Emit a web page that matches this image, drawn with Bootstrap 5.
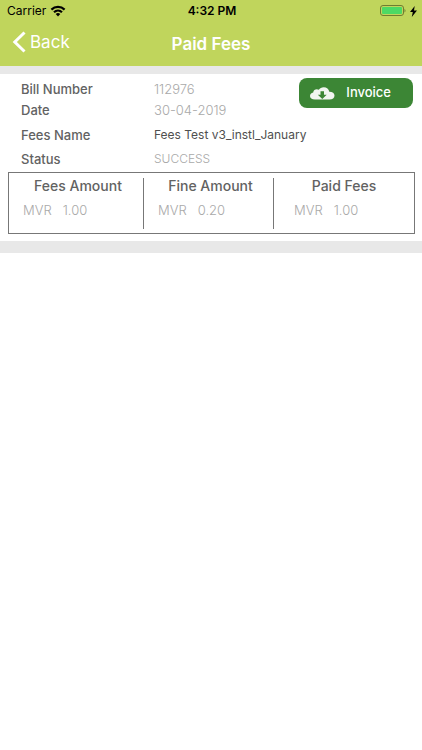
<!DOCTYPE html>
<html lang="en">
<head>
<meta charset="utf-8">
<meta name="viewport" content="width=device-width, initial-scale=1">
<title>Paid Fees</title>
<link href="https://cdn.jsdelivr.net/npm/bootstrap@5.3.0/dist/css/bootstrap.min.css" rel="stylesheet">
<style>
body { font-family: Inter, "Liberation Sans", sans-serif; font-size: 14px; line-height: 20px; color: #626262; }
.app-header { background: #c0d55c; }
.status-line { height: 22px; font-size: 12px; padding: 0 5px 0 7px; }
.title-line { height: 44px; padding: 0 12px 1px; color: #fff; font-size: 17px; }
.page-title { font-size: 17px; line-height: 20px; }
.side { flex: 1 1 0; }
.bill { border-top: 8px solid #e8e8e8; border-bottom: 12px solid #e8e8e8; padding: 4px 7px 7px 8px; }
.details { display: grid; grid-template-columns: 133px 1fr 114px; grid-template-rows: 21px 21px 29px 20px; align-items: center; padding: 0 2px 3px 13px; margin: 0; }
.details dt { grid-column: 1; font-size: 13px; font-weight: 500; }
.details dd { grid-column: 2; margin: 0; }
.details .wide { grid-column: 2 / span 2; font-size: 12px; color: #4f4f4f; }
.pale { color: #a9a9a9; font-size: 13px; font-weight: 300; }
.details .state { font-size: 12px; }
.details .invoice-cell { grid-column: 3; grid-row: 1 / span 2; align-self: start; }
.btn-invoice, .btn-invoice:hover { background: #3c8635; color: #fff; border: 0; border-radius: 8px; height: 30px; font-size: 13px; font-weight: 500; padding: 0 22px 0 11px; }
.amounts { display: grid; grid-template-columns: 134fr 130fr 141fr; border: 1px solid #777; height: 62px; padding: 5px 0 4px; }
.amount { padding-left: 14px; }
.amount + .amount { border-left: 1px solid #777; }
.amount h2 { font-size: 14px; line-height: 16px; font-weight: 500; margin: 0 10px 8px 0; text-align: center; }
.amount:last-child { padding-left: 20px; }
.amount:last-child h2 { margin-right: 20px; }
.amount p { line-height: 16px; gap: 11px; }
</style>
<script src="https://cdn.jsdelivr.net/npm/bootstrap@5.3.0/dist/js/bootstrap.bundle.min.js"></script>
</head>
<body class="bg-white">
<header class="app-header">
  <div class="status-line d-flex align-items-center text-black">
    <div class="side d-flex align-items-center gap-1">
      <span>Carrier</span>
      <svg width="16" height="12" viewBox="0 0 16 12" aria-hidden="true"><g fill="none" stroke="#000" stroke-width="2.2"><path d="M1.4 4.600a9.500 9.500 0 0 1 13.200 0"/><path d="M4 7.300a5.800 5.800 0 0 1 8 0"/></g><path d="M5.700 9.100a3.400 3.400 0 0 1 4.600 0L8 11.400z"/></svg>
    </div>
    <span class="fw-semibold">4:32 PM</span>
    <div class="side d-flex align-items-center justify-content-end gap-1">
      <svg width="27" height="12" viewBox="0 0 27 12" aria-hidden="true"><rect x="1.5" y=".5" width="23" height="10" rx="2.5" fill="none" stroke="#6f7c32"/><rect x="3" y="2" width="20" height="7" rx="1" fill="#4cd964"/><path d="M25.500 3.800q2 2 0 3.800z" fill="#6f7c32"/></svg>
      <svg width="7" height="11" viewBox="0 0 7 11" aria-hidden="true"><path d="M4.700 0 0 6h2.800L1.800 11 7 4.600H4z"/></svg>
    </div>
  </div>
  <nav class="title-line d-flex align-items-center" aria-label="Page">
    <div class="side"><a href="#" class="d-inline-flex align-items-center text-white text-decoration-none gap-1"><svg width="14" height="22" viewBox="0 0 14 22" fill="none" stroke="#fff" stroke-width="3" aria-hidden="true"><path d="M12.500 1.500 2.800 11l9.700 9.500"/></svg><span>Back</span></a></div>
    <h1 class="page-title m-0 fw-semibold">Paid Fees</h1>
    <div class="side"></div>
  </nav>
</header>
<main>
  <section class="bill">
    <dl class="details">
      <dt>Bill Number</dt><dd class="pale">112976</dd>
      <dd class="invoice-cell">
        <button type="button" class="btn btn-invoice w-100 d-flex align-items-center justify-content-between">
          <svg width="25" height="13" viewBox="0 0 25 13" aria-hidden="true"><path d="M5 12.500C1.800 12.500 0 11 0 8.900c0-1.900 1.300-3.200 3.200-3.500C3.500 3.300 5 2.300 6.800 2.300c.8 0 1.400.2 2 .5C9.800 1 11.600.2 13.700.2c3 0 5.200 1.900 5.600 4.600 3.300.1 5.200 1.500 5.200 3.800 0 2.500-2 3.900-5 3.900z" fill="#f1f5f0"/><path d="M10.500 4.300h3.500v3.500h2.700l-4.400 4.200-4.500-4.200h2.700z" fill="#3c8635"/></svg>
          <span>Invoice</span>
        </button>
      </dd>
      <dt>Date</dt><dd class="pale">30-04-2019</dd>
      <dt>Fees Name</dt><dd class="wide">Fees Test v3_instl_January</dd>
      <dt>Status</dt><dd class="pale state">SUCCESS</dd>
    </dl>
    <div class="amounts">
      <div class="amount"><h2>Fees Amount</h2><p class="pale d-flex m-0"><span>MVR</span><span>1.00</span></p></div>
      <div class="amount"><h2>Fine Amount</h2><p class="pale d-flex m-0"><span>MVR</span><span>0.20</span></p></div>
      <div class="amount"><h2>Paid Fees</h2><p class="pale d-flex m-0"><span>MVR</span><span>1.00</span></p></div>
    </div>
  </section>
</main>
</body>
</html>
